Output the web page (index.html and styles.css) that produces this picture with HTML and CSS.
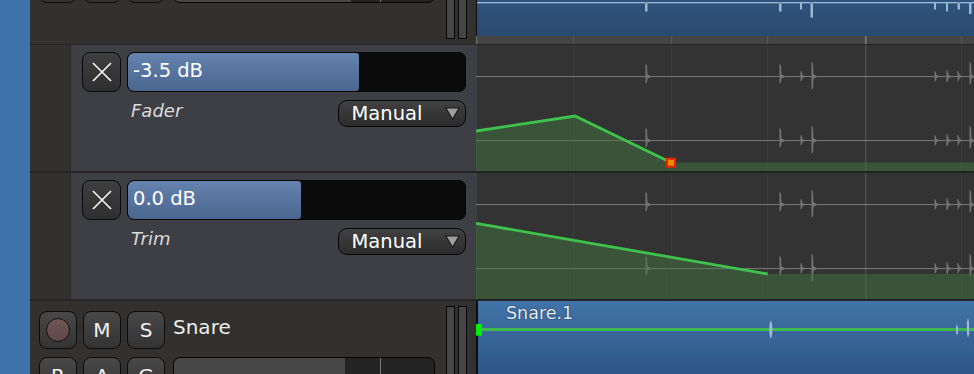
FILE: index.html
```html
<!DOCTYPE html>
<html>
<head>
<meta charset="utf-8">
<link rel="stylesheet" href="styles.css">
</head>
<body>
<div class="app">
  <div class="strip"></div>

  <!-- row 1: tail of previous track -->
  <div class="hdr hdr-top">
    <div class="ctrl-row ctrl-row--cut">
      <div class="btn"></div>
      <div class="btn"></div>
      <div class="btn"></div>
      <div class="fader fader--gray"><div class="fader-fill" style="width:177px"></div><div class="fader-tick"></div></div>
    </div>
    <div class="meters meters--top"><div class="meter"></div><div class="meter"></div></div>
  </div>
  <div class="tl tl-top">
    <div class="clip clip--top">
      <svg width="498" height="36" viewBox="0 0 498 36">
        <rect x="0" y="0" width="1" height="36" fill="#0b0b0b"/>
        <rect x="1" y="2" width="497" height="1.3" fill="#9dbcdc"/>
        <g fill="#9ab8d8">
          <rect x="169" y="2" width="2.5" height="9.5"/>
          <rect x="303" y="2" width="2.5" height="9.5"/>
          <rect x="324" y="2" width="2" height="7.5"/>
          <rect x="334.5" y="2" width="2.5" height="15.5"/>
          <rect x="458" y="2" width="2" height="7.5"/>
          <rect x="470" y="2" width="2" height="9.5"/>
          <rect x="481.5" y="2" width="2.5" height="7.5"/>
          <rect x="493" y="2" width="2.5" height="12"/>
        </g>
        <g fill="#8a8a8a">
          <rect x="169" y="2" width="2.5" height="1.5"/>
          <rect x="303" y="2" width="2.5" height="1.5"/>
          <rect x="334.5" y="2" width="2.5" height="1.5"/>
          <rect x="481.5" y="2" width="2.5" height="1.5"/>
        </g>
      </svg>
    </div>
    <div class="ruler">
      <svg width="498" height="8" viewBox="0 0 498 8">
        <rect x="0" y="0" width="1.3" height="8" fill="#6c6c6c"/>
        <g fill="#555">
          <rect x="97" y="0" width="1.3" height="8"/>
          <rect x="195" y="0" width="1.3" height="8"/>
          <rect x="291" y="0" width="1.3" height="8"/>
          <rect x="485" y="0" width="1.3" height="8"/>
        </g>
        <rect x="389" y="0" width="1.5" height="8" fill="#7c7c7c"/>
      </svg>
    </div>
  </div>

  <!-- row 2: Fader automation lane -->
  <div class="lane-hdr lane-hdr--first">
    <div class="lane-panel">
      <div class="xbtn"><svg width="20" height="20" viewBox="0 0 20 20"><path d="M1 1 L19 19 M19 1 L1 19" stroke="#f2f2f2" stroke-width="1.7" fill="none"/></svg></div>
      <div class="fader fader--lane"><div class="fader-fill" style="width:231px"></div><span class="fader-value">-3.5 dB</span></div>
      <div class="lane-meta">
        <span class="lane-label">Fader</span>
        <div class="select"><span>Manual</span><svg width="15" height="13" viewBox="0 0 15 13"><polygon points="0.8,0.8 14.2,0.8 7.5,12.2" fill="#9d9d9d" stroke="#1c1c1c" stroke-width="1.2"/></svg></div>
      </div>
    </div>
  </div>
  <div class="tl tl-lane tl-lane--first">
    <svg width="498" height="126" viewBox="0 0 498 126">
      <defs>
        <g id="wave">
          <rect x="0" y="-0.5" width="498" height="1.1" fill="#747474"/>
          <g fill="#747474">
            <polygon points="169.5,-13 171,-11 171.5,-2 175,-0.5 175,0.5 171.5,2 171,6 169.5,7"/>
            <polygon points="303.5,-13 305,-11 305.5,-2 309,-0.5 309,0.5 305.5,2 305,6 303.5,7"/>
            <polygon points="324.5,-6 326,-4 326.5,-1.5 329,-0.5 329,0.5 326.5,1.5 326,4 324.5,5"/>
            <polygon points="335.5,-15 337,-13 337.5,-2 341,-0.5 341,0.5 337.5,2 337,12 335.5,13"/>
            <polygon points="458.5,-6 460,-4 460.5,-1.5 463,-0.5 463,0.5 460.5,1.5 460,4 458.5,5"/>
            <polygon points="470.5,-7 472,-5 472.5,-1.5 475,-0.5 475,0.5 472.5,1.5 472,5 470.5,6"/>
            <polygon points="481.5,-6 483,-4 483.5,-1.5 486,-0.5 486,0.5 483.5,1.5 483,4 481.5,5"/>
            <polygon points="493.5,-15 495,-13 495.5,-2 498,-0.5 498,0.5 495.5,2 495,7 493.5,8"/>
          </g>
        </g>
        <g id="grid">
          <rect x="0" y="0" width="1.3" height="126" fill="#3d3d40"/>
          <g fill="#3b3b3b">
            <rect x="97" y="0" width="1.3" height="126"/>
            <rect x="195" y="0" width="1.3" height="126"/>
            <rect x="291" y="0" width="1.3" height="126"/>
            <rect x="485" y="0" width="1.3" height="126"/>
          </g>
          <rect x="389" y="0" width="1.5" height="126" fill="#4d4d4d"/>
        </g>
      </defs>
      <use href="#grid"/>
      <use href="#wave" transform="translate(0,31.5)"/>
      <use href="#wave" transform="translate(0,95.5)"/>
      <polygon points="0,86 99,71 195,117.5 498,117.5 498,126 0,126" fill="rgba(64,117,64,0.5)"/>
      <polyline points="0,86 99,71 195,117.5" fill="none" stroke="#3fc24c" stroke-width="2.8"/>
      <rect x="191" y="113.7" width="8" height="8" fill="#e88c00" stroke="#f01c0c" stroke-width="2"/>
    </svg>
  </div>

  <!-- row 3: Trim automation lane -->
  <div class="lane-hdr">
    <div class="lane-panel">
      <div class="xbtn"><svg width="20" height="20" viewBox="0 0 20 20"><path d="M1 1 L19 19 M19 1 L1 19" stroke="#f2f2f2" stroke-width="1.7" fill="none"/></svg></div>
      <div class="fader fader--lane"><div class="fader-fill" style="width:173px"></div><span class="fader-value">0.0 dB</span></div>
      <div class="lane-meta">
        <span class="lane-label">Trim</span>
        <div class="select"><span>Manual</span><svg width="15" height="13" viewBox="0 0 15 13"><polygon points="0.8,0.8 14.2,0.8 7.5,12.2" fill="#9d9d9d" stroke="#1c1c1c" stroke-width="1.2"/></svg></div>
      </div>
    </div>
  </div>
  <div class="tl tl-lane">
    <svg width="498" height="126" viewBox="0 0 498 126">
      <use href="#grid"/>
      <use href="#wave" transform="translate(0,31.5)"/>
      <use href="#wave" transform="translate(0,95.5)"/>
      <polygon points="0,50.3 291.7,101 498,101 498,126 0,126" fill="rgba(64,117,64,0.5)"/>
      <polyline points="0,50.3 291.7,101" fill="none" stroke="#3fc24c" stroke-width="2.8"/>
    </svg>
  </div>

  <!-- row 4: Snare track -->
  <div class="hdr hdr-snare">
    <div class="controls">
      <div class="ctrl-row">
        <div class="btn"><span class="rec-dot"></span></div>
        <div class="btn">M</div>
        <div class="btn">S</div>
        <span class="track-name">Snare</span>
      </div>
      <div class="ctrl-row">
        <div class="btn">R</div>
        <div class="btn">A</div>
        <div class="btn">G</div>
        <div class="fader fader--gray"><div class="fader-fill" style="width:171px"></div><div class="fader-tick"></div></div>
      </div>
    </div>
    <div class="meters meters--snare"><div class="meter"></div><div class="meter"></div></div>
  </div>
  <div class="tl tl-snare">
    <svg class="clip-canvas" width="498" height="73" viewBox="0 0 498 73">
      <rect x="0" y="0" width="2" height="73" fill="#0e0e0e"/>
      <rect x="0" y="27" width="498" height="3" fill="#3fb84c"/>
      <g fill="#9fb9d8">
        <polygon points="294.8,19 295.8,22 296.4,27 296.4,31 295.8,35 294.8,38.3 293.8,35 293.2,31 293.2,27 293.8,22"/>
        <polygon points="481,23.3 481.8,26 482,32 481,34.7 480.2,32 480,26"/>
        <polygon points="492,17 493,21 493.2,33 492,36.7 491,33 490.8,21"/>
      </g>
      <rect x="0" y="23" width="6" height="11.7" fill="#00f000"/>
    </svg>
    <span class="clip-name">Snare.1</span>
  </div>
</div>
</body>
</html>
```

FILE: styles.css
```css
html, body {
  margin: 0;
  padding: 0;
  background: #33312f;
  font-family: "DejaVu Sans", "Liberation Sans", sans-serif;
}

.app {
  display: grid;
  grid-template-columns: 30px 446px 498px;
  grid-template-rows: 44px 127px 128px 75px;
  width: 974px;
  height: 374px;
  overflow: hidden;
}

.strip {
  grid-row: 1 / span 4;
  background: #3f74ab;
}

/* ---------- track headers ---------- */
.hdr {
  background: #33312f;
  display: flex;
  align-items: flex-start;
  padding-left: 9px;
  overflow: hidden;
}

.ctrl-row {
  display: flex;
  align-items: flex-start;
  gap: 6px;
}

.ctrl-row--cut {
  margin-top: -35px;
}

.ctrl-row .fader {
  margin-left: 2px;
  width: 262px;
  height: 38px;
}

.btn {
  width: 38px;
  height: 38px;
  box-sizing: border-box;
  border: 1.5px solid #0c0c0c;
  border-radius: 8px;
  background: linear-gradient(#484848, #333333);
  display: flex;
  align-items: center;
  justify-content: center;
  color: #f2f2f2;
  font-size: 20px;
  flex: none;
}

.rec-dot {
  width: 24px;
  height: 24px;
  box-sizing: border-box;
  border-radius: 50%;
  border: 1.5px solid #111;
  background: linear-gradient(#6e5554, #5f4848);
}

.track-name {
  margin-left: 2px;
  margin-top: 4px;
  font-size: 20px;
  color: #ececec;
}

.meters {
  display: flex;
  gap: 3px;
  margin-left: 11px;
}

.meter {
  width: 9px;
  box-sizing: border-box;
  border: 1px solid #070707;
  background: #464646;
}

.meters--top .meter {
  height: 39px;
  border-top: 0;
}

.hdr-snare {
  border-top: 2px solid #262524;
}

.controls {
  display: flex;
  flex-direction: column;
  gap: 8px;
  padding-top: 10px;
}

.meters--snare {
  margin-top: 5px;
}

.meters--snare .meter {
  height: 90px;
}

/* ---------- faders ---------- */
.fader {
  position: relative;
  box-sizing: border-box;
  border: 1.5px solid #050505;
  border-radius: 7px;
  background: #0b0b0b;
  overflow: hidden;
  display: flex;
  align-items: center;
}

.fader-fill {
  position: absolute;
  left: 0;
  top: 0;
  bottom: 0;
  border-radius: 5px 3px 3px 5px;
  background: linear-gradient(#6483ae, #4a668f);
}

.fader--gray {
  background: #242424;
}

.fader--gray .fader-fill {
  background: #474747;
  border-radius: 5px 0 0 5px;
}

.fader-tick {
  position: absolute;
  top: 0;
  bottom: 0;
  left: 206px;
  width: 1px;
  background: #7a7a7a;
}

.fader-value {
  position: relative;
  padding: 0 0 3px 5px;
  font-size: 19.5px;
  color: #ffffff;
}

/* ---------- automation lane headers ---------- */
.lane-hdr {
  display: flex;
  background: #33312f;
  border-top: 2px solid #262524;
}

.lane-hdr--first {
  border-top-width: 1px;
}

.lane-panel {
  flex: 1;
  margin-left: 40px;
  border-left: 1px solid #2a2a2c;
  background: #3e3f44;
  display: grid;
  grid-template-columns: 39px 1fr;
  grid-template-rows: 40px 27px;
  gap: 8px 6px;
  align-content: start;
  padding: 7px 10px 0 11px;
}

.xbtn {
  box-sizing: border-box;
  border: 1.5px solid #0a0a0a;
  border-radius: 8px;
  background: linear-gradient(#3e3e3e, #2f2f2f);
  display: flex;
  align-items: center;
  justify-content: center;
}

.xbtn svg {
  display: block;
}

.lane-meta {
  grid-column: 2;
  display: flex;
  justify-content: space-between;
  align-items: flex-start;
}

.lane-label {
  font-style: italic;
  font-size: 18px;
  line-height: 21px;
  color: #dadada;
  padding-left: 4px;
}

.select {
  width: 128px;
  height: 27px;
  box-sizing: border-box;
  border: 1.5px solid #080808;
  border-radius: 9px;
  background: linear-gradient(#414141, #2c2c2c);
  display: flex;
  align-items: center;
  padding: 0 5.5px 0 12.5px;
  color: #ffffff;
  font-size: 19.5px;
}

.select svg {
  margin-left: auto;
  display: block;
}

/* ---------- timeline ---------- */
.tl {
  background: #333333;
  overflow: hidden;
}

.tl svg {
  display: block;
}

.tl-top {
  display: flex;
  flex-direction: column;
}

.clip--top {
  height: 36px;
  background: linear-gradient(#2f547d, #2a4a70);
}

.ruler {
  flex: 1;
  background: #444444;
}

.tl-lane {
  border-top: 2px solid #222222;
}

.tl-lane--first {
  border-top-width: 1px;
}

.tl-snare {
  position: relative;
  border-top: 2px solid #222222;
  background: linear-gradient(#4274a9, #2d5686);
}

.clip-canvas {
  position: absolute;
  left: 0;
  top: 0;
}

.clip-name {
  position: relative;
  display: block;
  padding: 2px 0 0 30px;
  font-size: 17.5px;
  color: #e4ecf4;
  text-shadow: 0 0 1.5px #1c3656, 0 0 1px #1c3656;
}
```
